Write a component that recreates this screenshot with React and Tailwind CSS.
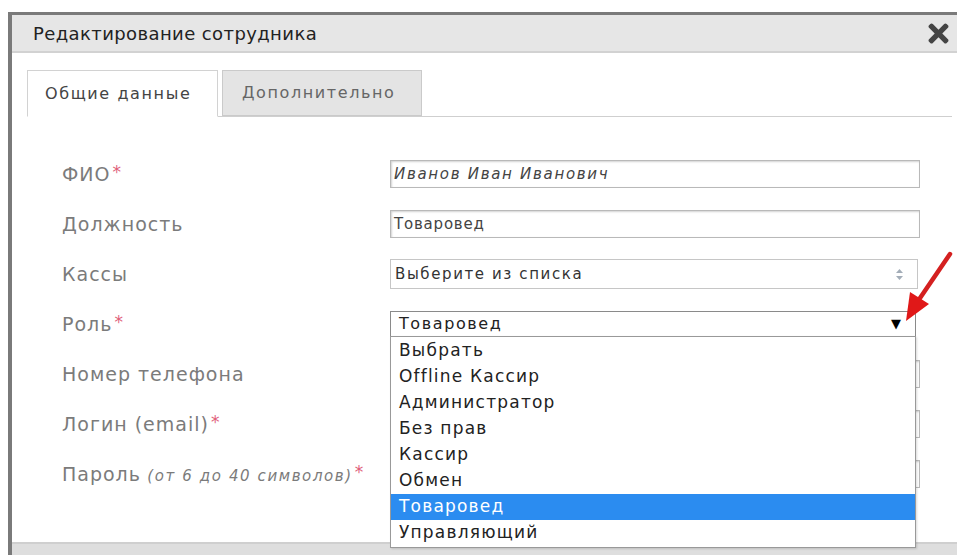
import React from "react";
import { FaTimes } from "react-icons/fa";

const roles = [
  "Выбрать",
  "Offline Кассир",
  "Администратор",
  "Без прав",
  "Кассир",
  "Обмен",
  "Товаровед",
  "Управляющий",
];

const Label = ({ children, required, hint }) => (
  <div className="w-[328px] shrink-0 text-[19px] tracking-[1px] text-[#7b7b7b] whitespace-nowrap">
    {children}
    {hint && <span className="text-[15px] italic tracking-[1.6px]"> {hint}</span>}
    {required && <span className="text-[#e0607a] text-[17px] align-top ml-[2px]">*</span>}
  </div>
);

const TextInput = ({ value, italic }) => (
  <div
    className={`w-[530px] h-[28px] border border-[#b9b9b9] shadow-[inset_1px_1px_2px_rgba(0,0,0,0.18)] bg-white flex items-center px-[3px] text-[15px] text-[#444] ${
      italic ? "italic tracking-[1.7px]" : "tracking-[0.8px]"
    }`}
  >
    {value}
  </div>
);

const Row = ({ children }) => <div className="h-[50px] flex items-center pl-[50px]">{children}</div>;

export default function App() {
  return (
    <div className="w-[957px] h-[555px] overflow-hidden bg-white relative font-['DejaVu_Sans',sans-serif]">
      <div className="ml-[8px] mt-[12px] w-[960px] h-[550px] border-t-[3px] border-l-[4px] border-[#7a7a7a] flex flex-col">
        {/* header */}
        <div className="h-[38px] bg-[#e6e6e6] border-b-2 border-[#d2d2d2] flex items-center justify-between pl-[21px] pr-[14px] shrink-0">
          <span className="text-[18px] tracking-[0.4px] text-[#222]">Редактирование сотрудника</span>
          <FaTimes size={29} className="text-[#444] mr-[1px]" />
        </div>

        {/* body */}
        <div className="flex-1 flex flex-col">
          <div className="ml-[15px] mr-[16px] mt-[17px] flex border-b border-[#cfcfcf]">
            <div className="w-[191px] h-[47px] -mb-px border border-[#d2d2d2] border-b-white bg-white flex items-center pl-[17px] text-[16px] tracking-[1.6px] text-[#444]">
              Общие данные
            </div>
            <div className="ml-[4px] w-[200px] h-[46px] border border-[#cacaca] bg-[#e4e4e4] flex items-center pl-[19px] text-[16px] tracking-[1.6px] text-[#666]">
              Дополнительно
            </div>
          </div>

          <div className="mt-[32px]">
            <Row>
              <Label required>ФИО</Label>
              <TextInput value="Иванов Иван Иванович" italic />
            </Row>
            <Row>
              <Label>Должность</Label>
              <TextInput value="Товаровед" />
            </Row>
            <Row>
              <Label>Кассы</Label>
              <div className="w-[528px] h-[30px] border border-[#c6c6c6] bg-white flex items-center justify-between pl-[4px] pr-[14px] text-[15px] tracking-[1.6px] text-[#333]">
                Выберите из списка
                <svg width="7" height="11" viewBox="0 0 7 11">
                  <path d="M3.5 0 L7 4 L0 4 Z M3.5 11 L7 7 L0 7 Z" fill="#a3adb8" />
                </svg>
              </div>
            </Row>
            <Row>
              <Label required>Роль</Label>
              <div className="relative w-[526px] h-[26px]">
                <div className="h-full border border-[#8a8a8a] bg-white flex items-center justify-between pl-[8px] pr-[14px] text-[16px] tracking-[1.6px] text-[#222]">
                  Товаровед
                  <span className="text-[13px] tracking-normal text-black">▼</span>
                </div>
                {/* open option list */}
                <div className="absolute left-0 top-[25px] w-[526px] border border-[#999] bg-white z-10 py-[1px] shadow-[1px_1px_2px_rgba(0,0,0,0.15)]">
                  {roles.map((r) => (
                    <div
                      key={r}
                      className={`h-[26px] flex items-center pl-[8px] text-[17px] tracking-[1.2px] ${
                        r === "Товаровед" ? "bg-[#2b8cf0] text-white" : "text-[#222]"
                      }`}
                    >
                      {r}
                    </div>
                  ))}
                </div>
              </div>
            </Row>
            <Row>
              <Label>Номер телефона</Label>
              <TextInput value="" />
            </Row>
            <Row>
              <Label required>Логин (email)</Label>
              <TextInput value="" />
            </Row>
            <Row>
              <Label required hint="(от 6 до 40 символов)">
                Пароль
              </Label>
              <TextInput value="" />
            </Row>
          </div>

          <div className="mt-auto h-[20px] bg-[#dedede] border-t-2 border-[#cfcfcf]" />
        </div>
      </div>

      {/* red pointer arrow */}
      <svg className="absolute left-[890px] top-[245px] z-20" width="70" height="85" viewBox="0 0 70 85">
        <line x1="60" y1="9" x2="28" y2="56" stroke="#d42020" strokeWidth="4.5" strokeLinecap="round" />
        <polygon points="16,76 20,47 39,59" fill="#e01818" />
      </svg>
    </div>
  );
}
